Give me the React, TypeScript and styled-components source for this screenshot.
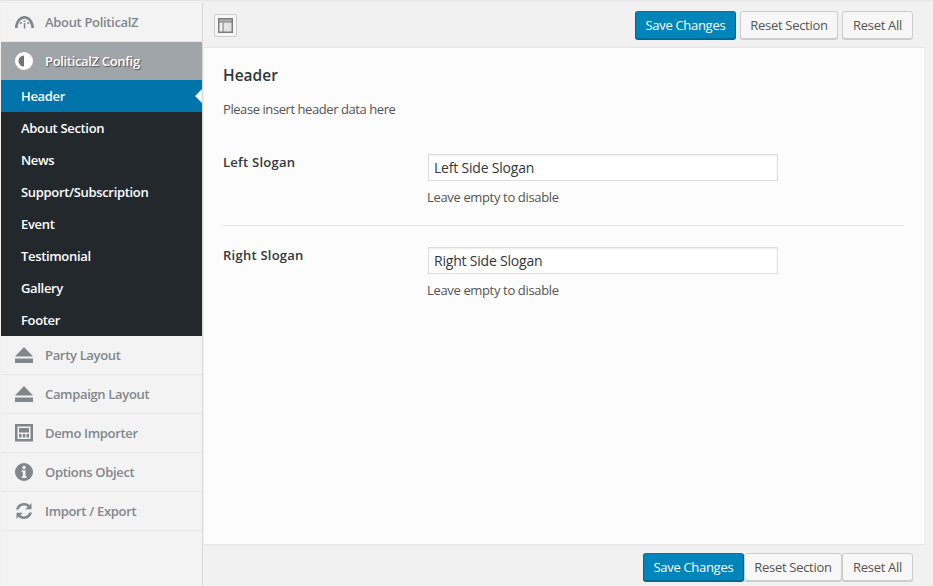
import React from 'react';
import styled, { createGlobalStyle } from 'styled-components';

const GlobalStyle = createGlobalStyle`
  html, body {
    margin: 0;
    padding: 0;
    height: 100%;
    overflow: hidden;
    background: #e5e5e5;
  }
  body {
    font-family: "Open Sans", sans-serif;
    font-size: 13px;
    color: #444;
  }
`;

const GaugeIcon = () => (
  <svg width="19" height="18" viewBox="0 1 19 18" fill="#82878c">
    <path d="M0 16C0 9.500 4.200 4 9.500 4S19 9.500 19 16h-2.700C16.300 11 13.300 6.700 9.500 6.700S2.700 11 2.700 16z" />
    <rect x="8.800" y="11" width="1.500" height="5.500" />
    <rect x="8.500" y="8.500" width="2" height="1.500" />
    <rect x="4.800" y="10.200" width="2" height="1.600" />
    <rect x="12.300" y="10.200" width="2" height="1.600" />
  </svg>
);

const ContrastIcon = () => (
  <svg width="18" height="18" viewBox="0 0 18 18">
    <circle cx="9" cy="9" r="9" fill="#fff" />
    <path d="M9 3.500v11a5.500 5.500 0 0 1 0-11z" fill="#6d7276" />
  </svg>
);

const EjectIcon = () => (
  <svg width="18" height="18" viewBox="0 0 18 18" fill="#82878c">
    <path d="M9 1l9 9.500H0z" />
    <rect x="0" y="12.500" width="18" height="4.500" />
  </svg>
);

const ImporterIcon = () => (
  <svg width="18" height="18" viewBox="0 0 18 18" fill="#82878c">
    <path fillRule="evenodd" d="M0 0h18v17.500H0zM2.500 2.500v12.500h13V2.500z" />
    <path d="M4 4h10v4.500H4zM4 10h2.500v3.500H4zM7.800 10h2.500v3.500H7.800zM11.500 10H14v3.500h-2.500z" />
  </svg>
);

const InfoIcon = () => (
  <svg width="18" height="18" viewBox="0 0 18 18">
    <circle cx="9" cy="9" r="9" fill="#82878c" />
    <circle cx="9" cy="4.500" r="1.700" fill="#f3f3f3" />
    <path d="M6.800 7.300h3.700v6h1v1.700H6.800v-1.700h1v-4.300h-1z" fill="#f3f3f3" />
  </svg>
);

const RefreshIcon = () => (
  <svg width="18" height="18" viewBox="0 0 18 18" fill="#82878c">
    <path d="M1 7.500C1.800 3.800 5 1 9 1c2.200 0 4.100.8 5.500 2.200L16.500.9v6.400h-6.300l2.400-2.300C11.700 4.100 10.400 3.600 9 3.600c-2.500 0-4.500 1.600-5.300 3.900z" />
    <path d="M17 10.500C16.200 14.200 13 17 9 17c-2.200 0-4.100-.8-5.500-2.200l-2 2.300v-6.400h6.300L5.400 13c.9.9 2.200 1.400 3.600 1.400 2.500 0 4.500-1.600 5.300-3.900z" />
  </svg>
);

const LayoutIcon = () => (
  <svg width="15" height="15" viewBox="0 0 15 15">
    <rect width="15" height="15" fill="#7d7d7d" />
    <rect x="1.500" y="1.500" width="12" height="2" fill="#b5b5b5" />
    <rect x="1.500" y="4.500" width="3" height="9" fill="#f2f2f2" />
    <rect x="5.500" y="4.500" width="8" height="9" fill="#e4e4e4" />
  </svg>
);

const topItems = [{ label: 'About PoliticalZ', icon: <GaugeIcon /> }];
const subItems = ['Header', 'About Section', 'News', 'Support/Subscription', 'Event', 'Testimonial', 'Gallery', 'Footer'];
const bottomItems = [
  { label: 'Party Layout', icon: <EjectIcon /> },
  { label: 'Campaign Layout', icon: <EjectIcon /> },
  { label: 'Demo Importer', icon: <ImporterIcon /> },
  { label: 'Options Object', icon: <InfoIcon /> },
  { label: 'Import / Export', icon: <RefreshIcon /> },
];
const fields = [
  { label: 'Left Slogan', value: 'Left Side Slogan' },
  { label: 'Right Slogan', value: 'Right Side Slogan' },
];

export default function App() {
  return (
    <>
      <GlobalStyle />
      <Page>
        <Sidebar>
          {topItems.map(item => (
            <MenuItem key={item.label}>
              <IconSlot>{item.icon}</IconSlot>
              {item.label}
            </MenuItem>
          ))}
          <ActiveItem>
            <IconSlot><ContrastIcon /></IconSlot>
            PoliticalZ Config
          </ActiveItem>
          <SubMenu>
            {subItems.map((label, index) => (
              <SubItem key={label} $current={index === 0}>{label}</SubItem>
            ))}
          </SubMenu>
          {bottomItems.map(item => (
            <MenuItem key={item.label}>
              <IconSlot>{item.icon}</IconSlot>
              {item.label}
            </MenuItem>
          ))}
        </Sidebar>
        <Main>
          <TopBar>
            <LayoutToggle><LayoutIcon /></LayoutToggle>
            <Actions $gap={4}>
              <PrimaryButton>Save Changes</PrimaryButton>
              <Button>Reset Section</Button>
              <ResetAllButton>Reset All</ResetAllButton>
            </Actions>
          </TopBar>
          <Content>
            <Title>Header</Title>
            <Intro>Please insert header data here</Intro>
            {fields.map(field => (
              <FieldRow key={field.label}>
                <FieldLabel>{field.label}</FieldLabel>
                <FieldBody>
                  <TextInput defaultValue={field.value} />
                  <Hint>Leave empty to disable</Hint>
                </FieldBody>
              </FieldRow>
            ))}
          </Content>
          <BottomBar>
            <Actions $gap={0}>
              <PrimaryButton>Save Changes</PrimaryButton>
              <Button>Reset Section</Button>
              <ResetAllButton>Reset All</ResetAllButton>
            </Actions>
          </BottomBar>
        </Main>
      </Page>
    </>
  );
}

const Page = styled.div`
  display: flex;
  width: 933px;
  height: 586px;
  padding: 2px 9px 0 1px;
  box-sizing: border-box;
  background: #f1f1f1;
  border-top: 1px solid #e5e5e5;
`;

const Sidebar = styled.nav`
  width: 201px;
  flex: none;
  background: #f3f3f3;
  border-right: 1px solid #d8d8d8;
  font-weight: 600;
  letter-spacing: -0.33px;
`;

const MenuItem = styled.div`
  display: flex;
  align-items: center;
  height: 38px;
  box-sizing: content-box;
  border-bottom: 1px solid #e7e7e7;
  color: #82878c;
`;

const ActiveItem = styled.div`
  display: flex;
  align-items: center;
  height: 38px;
  background: #a0a5aa;
  color: #fff;
  text-shadow: 1px 1px 1px #555;
`;

const IconSlot = styled.span`
  display: flex;
  width: 44px;
  padding-left: 14px;
  box-sizing: border-box;
  flex: none;
`;

const SubMenu = styled.div`
  background: #23282d;
`;

const SubItem = styled.div<{ $current: boolean }>`
  position: relative;
  height: 32px;
  line-height: 32px;
  padding-left: 20px;
  color: #fff;
  background: ${props => (props.$current ? '#0073aa' : 'transparent')};

  &::after {
    content: '';
    display: ${props => (props.$current ? 'block' : 'none')};
    position: absolute;
    right: 0;
    top: 9px;
    border: 7px solid transparent;
    border-right-color: #fff;
    border-left-width: 0;
  }
`;

const Main = styled.main`
  flex: 1;
  display: flex;
  flex-direction: column;
  min-width: 0;
  background: #fcfcfc;
  margin-left: 1px;
`;

const TopBar = styled.div`
  display: flex;
  align-items: center;
  justify-content: space-between;
  height: 44px;
  padding: 0 11px 0 10px;
  background: #f1f1f1;
  border-bottom: 1px solid #e5e5e5;
`;

const LayoutToggle = styled.span`
  display: flex;
  align-items: center;
  justify-content: center;
  width: 21px;
  height: 21px;
  border: 1px solid #ccc;
  border-radius: 2px;
  background: #f7f7f7;
`;

const Actions = styled.div<{ $gap: number }>`
  display: flex;
  gap: ${props => props.$gap}px;
`;

const Button = styled.button`
  height: 28px;
  padding: 0 9.500px;
  font: 13px/26px "Open Sans", sans-serif;
  letter-spacing: -0.3px;
  color: #555;
  background: #f7f7f7;
  border: 1px solid #ccc;
  border-radius: 3px;
  box-shadow: 0 1px 0 #ccc;
`;

const ResetAllButton = styled(Button)`
  padding: 0 10px;
`;

const PrimaryButton = styled(Button)`
  color: #fff;
  background: #0085ba;
  border-color: #0073aa #006799 #006799;
  box-shadow: 0 1px 0 #006799;
`;

const Content = styled.div`
  flex: 1;
  padding: 0 20px 0 19px;
`;

const Title = styled.h2`
  margin: 0;
  padding-top: 17px;
  font-size: 15.500px;
  line-height: 20px;
  font-weight: 600;
  color: #32373c;
`;

const Intro = styled.p`
  margin: 14px 0 14px;
  line-height: 20px;
  letter-spacing: -0.43px;
  color: #555;
`;

const FieldRow = styled.div`
  display: flex;
  padding: 21px 0 18px;
  border-bottom: 1px solid #e5e5e5;

  &:last-child {
    border-bottom: 0;
  }
`;

const FieldLabel = styled.div`
  width: 205px;
  flex: none;
  line-height: 16px;
  letter-spacing: 0.25px;
  font-weight: 600;
  color: #32373c;
`;

const FieldBody = styled.div`
  display: flex;
  flex-direction: column;
`;

const TextInput = styled.input`
  width: 350px;
  height: 27px;
  padding: 0 5px;
  box-sizing: border-box;
  font: 14px "Open Sans", sans-serif;
  letter-spacing: -0.2px;
  color: #32373c;
  background: #fff;
  border: 1px solid #ddd;
  box-shadow: inset 0 1px 2px rgba(0, 0, 0, 0.07);
  outline: none;
`;

const Hint = styled.span`
  margin: 7px 0 0 -1px;
  font-size: 13px;
  line-height: 19px;
  letter-spacing: -0.35px;
  color: #555;
`;

const BottomBar = styled.div`
  display: flex;
  justify-content: flex-end;
  align-items: center;
  height: 38px;
  padding: 3px 11px 0 0;
  background: #f1f1f1;
  border-top: 1px solid #e5e5e5;
`;
